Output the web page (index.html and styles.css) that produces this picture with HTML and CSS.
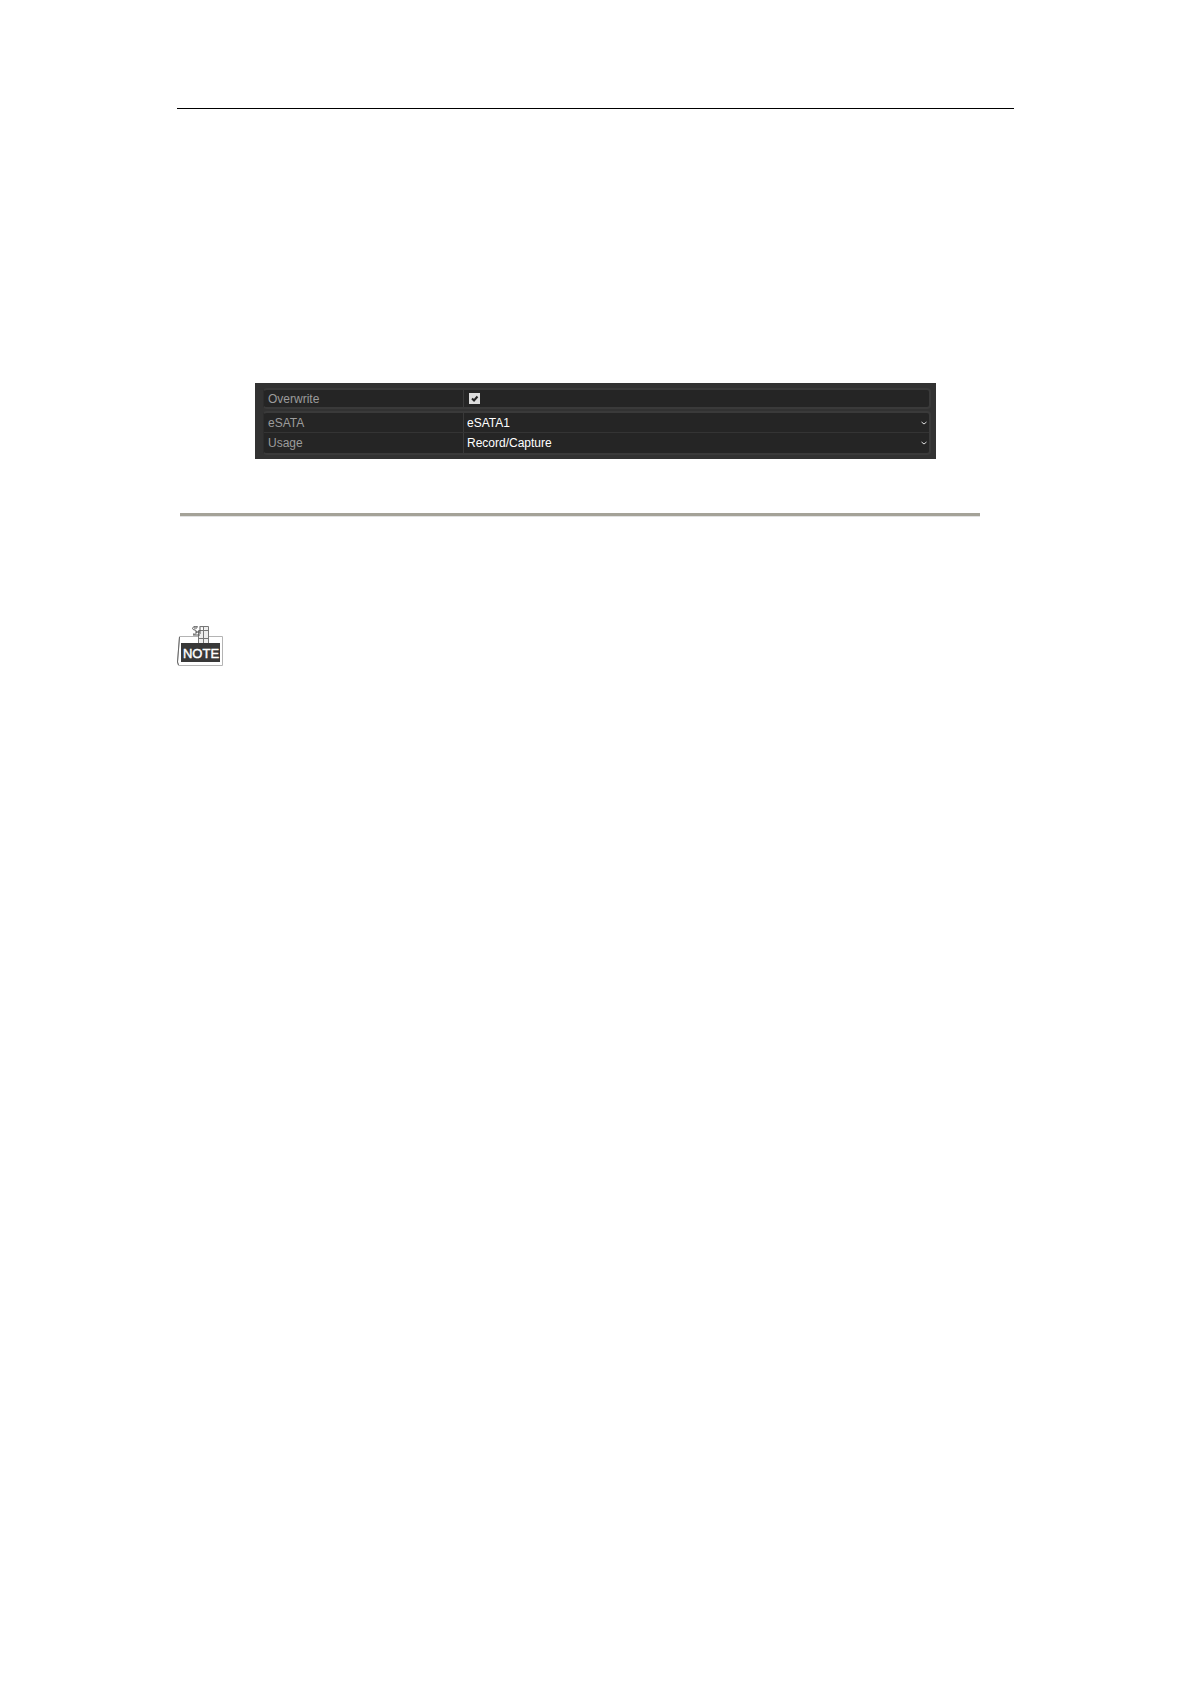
FILE: index.html
```html
<!DOCTYPE html>
<html lang="en">
<head>
    <meta charset="UTF-8">
    <meta name="viewport" content="width=device-width, initial-scale=1.0">
    <title>eSATA</title>
    <link rel="stylesheet" href="styles.css">
</head>
<body>
    <header class="page-header"></header>

    <main>
        <form class="settings-panel">
            <div class="group">
                <div class="row">
                    <label for="overwrite">Overwrite</label>
                    <div class="value">
                        <input type="checkbox" id="overwrite" checked>
                        <svg class="tick" viewBox="0 0 11 11"><path d="M3 5.5 L5 7.5 L8.5 3.5"/></svg>
                    </div>
                </div>
            </div>
            <div class="group">
                <div class="row">
                    <label for="esata">eSATA</label>
                    <div class="value">
                        <select id="esata">
                            <option>eSATA1</option>
                        </select>
                        <svg class="arrow" viewBox="0 0 6 4"><path d="M0.5 1 L3 3 L5.5 1"/></svg>
                    </div>
                </div>
                <div class="row">
                    <label for="usage">Usage</label>
                    <div class="value">
                        <select id="usage">
                            <option>Record/Capture</option>
                        </select>
                        <svg class="arrow" viewBox="0 0 6 4"><path d="M0.5 1 L3 3 L5.5 1"/></svg>
                    </div>
                </div>
            </div>
        </form>

        <hr class="section-line">

        <svg class="note-icon" viewBox="0 0 48 42" role="img" aria-label="Note">
            <!-- board -->
            <path class="board" d="M2.5 11.5 H45.5 V40.5 H1.5 L0.5 37 Z"/>
            <path class="board-edge" d="M2.5 12 L0.5 37 L1.5 40"/>
            <!-- clip -->
            <path class="clip" d="M21.5 5.5 H31.5 V18.5 H21.5 Z M26.5 1.5 V18 M22.5 1.5 H31.5 V6.5 M21.5 13.5 H31.5"/>
            <path class="clip-dark" d="M21 2 C15 0 14 5 18 5 C21 6 20 10 16 9 M17 3 H20 M18 7 H23 M16 10 H23 M23 2 V9"/>
            <rect class="plate" x="4" y="18" width="39" height="19"/>
            <text x="24" y="33" text-anchor="middle">NOTE</text>
        </svg>
    </main>
</body>
</html>
```
FILE: styles.css
```css
body {
    margin: 0;
    padding: 108px 177px;
    background-color: #fff;
    font-family: "Liberation Sans", Arial, sans-serif;
    font-size: 12px;
}
.page-header {
    border-top: 1px solid #000;
    margin-bottom: 274px;
}

.settings-panel {
    display: flex;
    flex-direction: column;
    gap: 2px;
    margin: 0 78px;
    padding: 5px 5px 4px 8px;
    background-color: #323232;
}
.group {
    border: 2px solid #3a3a3a;
    border-left: 1px solid #2c2c2c;
    border-radius: 4px;
    background-color: #252525;
}
.row {
    display: flex;
    height: 19px;
}
.group:first-child .row {
    height: 17px;
}
.row + .row {
    height: 20px;
    border-top: 1px solid #343434;
}
.row label {
    box-sizing: border-box;
    display: flex;
    align-items: center;
    width: 199px;
    padding-left: 4px;
    color: #9c9c9c;
}
.value {
    position: relative;
    flex: 1;
    display: flex;
    align-items: center;
    padding-left: 3px;
    border-left: 1px solid #3a3a3a;
}
.value select {
    appearance: none;
    width: 100%;
    height: 18px;
    padding: 0;
    border: none;
    background: transparent;
    color: #fff;
    font: inherit;
}
.value select option {
    background-color: #252525;
}
.value input {
    appearance: none;
    width: 11px;
    height: 11px;
    margin: 0 0 0 2px;
    background-color: #dcdcdc;
}
.tick {
    position: absolute;
    left: 5px;
    width: 11px;
    height: 11px;
    fill: none;
    stroke: #222;
    stroke-width: 2;
    pointer-events: none;
}
.value input:not(:checked) + .tick {
    display: none;
}
.arrow {
    position: absolute;
    right: 2px;
    width: 6px;
    height: 4px;
    fill: none;
    stroke: #ddd;
    stroke-width: 1;
    pointer-events: none;
}

.section-line {
    height: 3px;
    margin: 54px 34px 108px 3px;
    border: none;
    border-bottom: 1px solid #e2e2e2;
    background-color: #a4a298;
}

.note-icon {
    display: block;
    width: 48px;
    height: 42px;
}
.board {
    fill: #fff;
    stroke: #b4b4b4;
}
.board-edge {
    fill: none;
    stroke: #666;
}
.clip {
    fill: #eee;
    stroke: #777;
}
.clip-dark {
    fill: none;
    stroke: #555;
}
.plate {
    fill: #383838;
}
.note-icon text {
    fill: #fff;
    stroke: #fff;
    stroke-width: 0.4;
    font-size: 13px;
}
```
